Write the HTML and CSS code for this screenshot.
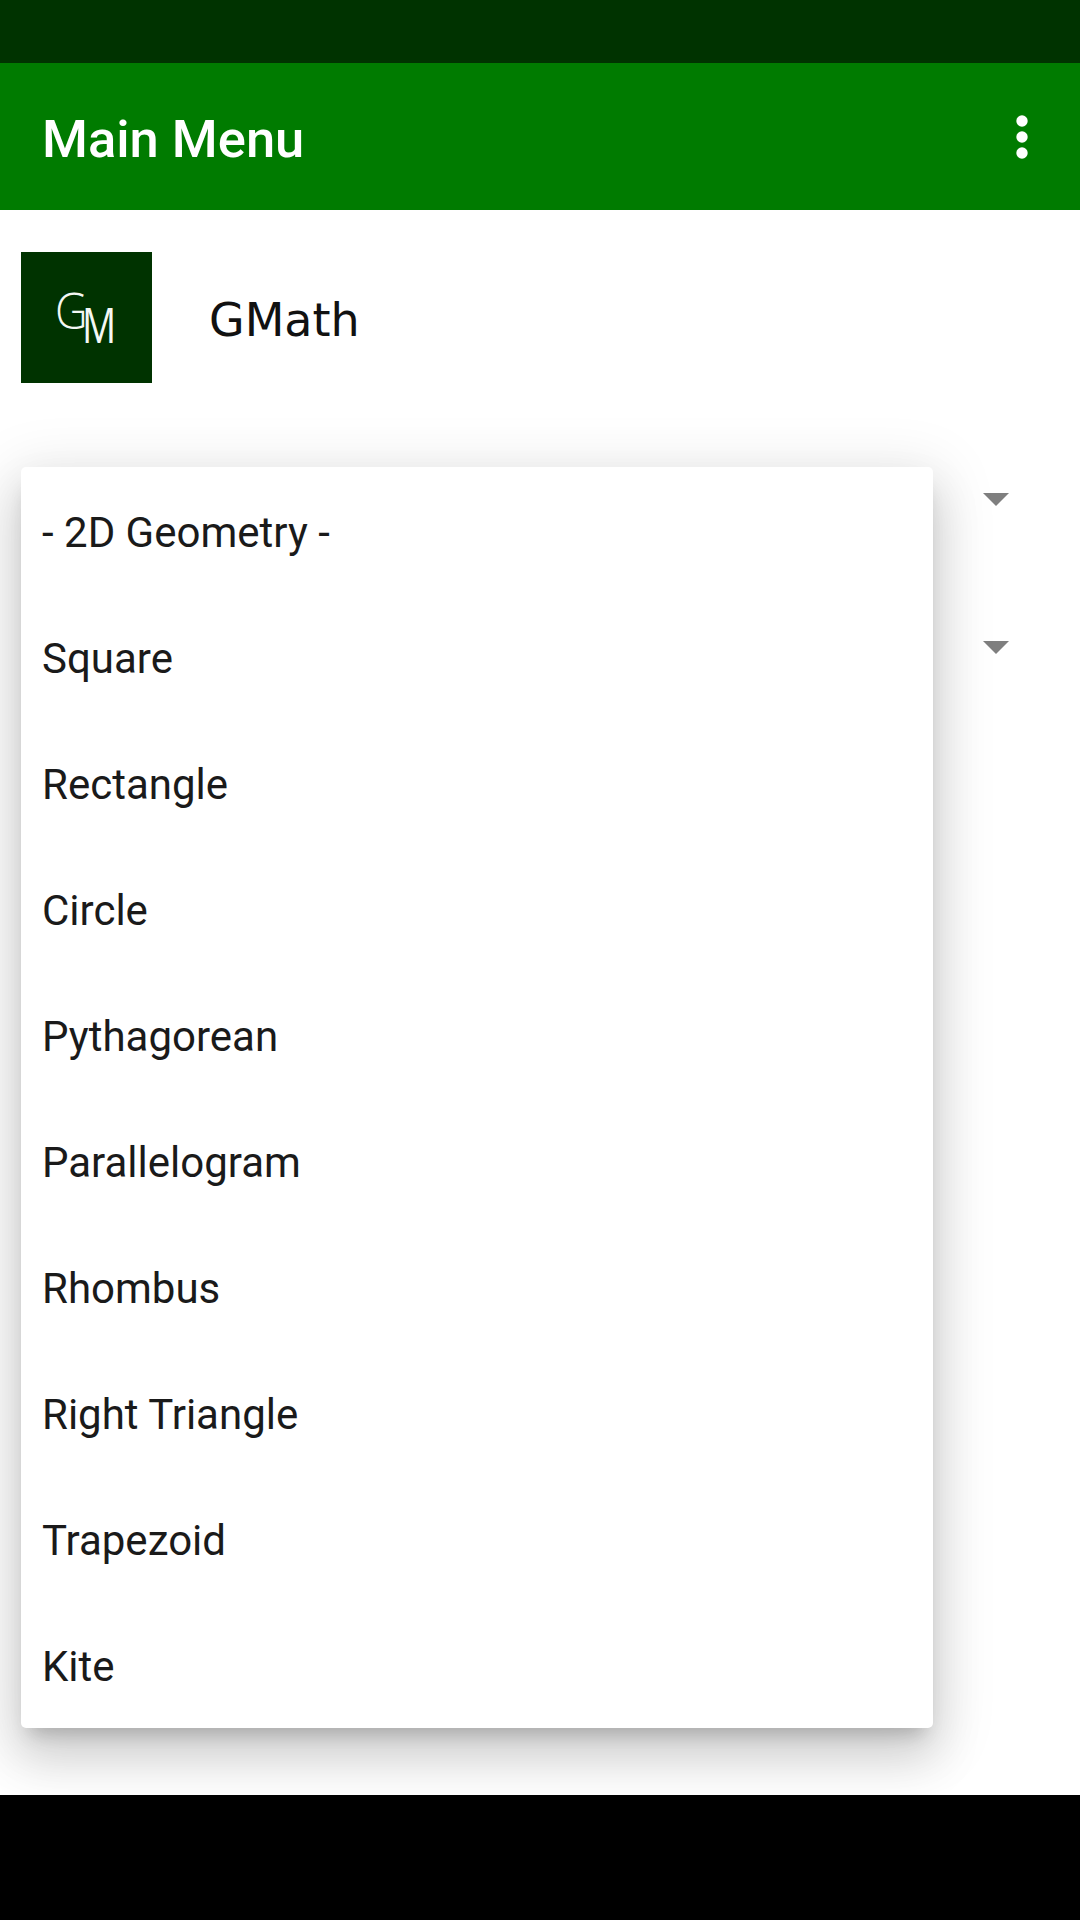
FILE: index.html
```html
<!DOCTYPE html>
<html lang="en">
<head>
<meta charset="utf-8">
<title>Main Menu</title>
<link rel="stylesheet" href="styles.css">
</head>
<body>
<div class="screen">
  <div class="status-bar"></div>
  <header class="app-bar">
    <h1 class="app-title">Main Menu</h1>
    <svg class="overflow" width="14" height="44" viewBox="0 0 14 44"><circle cx="7" cy="6" r="5.7"/><circle cx="7" cy="22" r="5.7"/><circle cx="7" cy="38" r="5.7"/></svg>
  </header>
  <main class="content">
    <div class="brand">
      <div class="logo"><span class="logo-g">G</span><span class="logo-m">M</span></div>
      <div class="brand-name">GMath</div>
    </div>
    <div class="spinner"><span class="caret"></span></div>
    <div class="spinner"><span class="caret"></span></div>
    <ul class="menu">
      <li>- 2D Geometry -</li>
      <li>Square</li>
      <li>Rectangle</li>
      <li>Circle</li>
      <li>Pythagorean</li>
      <li>Parallelogram</li>
      <li>Rhombus</li>
      <li>Right Triangle</li>
      <li>Trapezoid</li>
      <li>Kite</li>
    </ul>
  </main>
  <div class="nav-bar"></div>
</div>
</body>
</html>
```
FILE: styles.css
```css
* { box-sizing: border-box; }
html, body { margin: 0; padding: 0; }
body { width: 1080px; height: 1920px; overflow: hidden; font-family: Roboto, sans-serif; background: #fff; }
.screen { width: 1080px; height: 1920px; display: flex; flex-direction: column; }
.status-bar { height: 63px; background: #003300; flex: none; }
.app-bar { height: 147px; flex: none; background: #007b00; display: flex; align-items: center; justify-content: space-between; padding: 6px 51px 0 42px; }
.app-title { margin: 0; color: #fff; font-size: 52.5px; font-weight: 500; line-height: 1; }
.overflow { fill: #fff; margin-top: -5px; }
.content { flex: 1; position: relative; overflow: hidden; padding: 42px 0 0 21px; }
.brand { display: flex; align-items: center; gap: 57px; }
.logo { width: 131px; height: 131px; background: #003300; position: relative; flex: none; color: #f4f8f4; font-family: "Open Sans", sans-serif; font-weight: 300; }
.logo-g { position: absolute; left: 34px; top: 25px; font-size: 49px; line-height: 1.36; transform: scaleX(.92); transform-origin: left top; }
.logo-m { position: absolute; left: 61px; top: 38px; font-size: 50px; line-height: 1.36; font-weight: 400; transform: scaleX(.76); transform-origin: left top; }
.brand-name { font-family: "DejaVu Sans", sans-serif; font-size: 46px; color: #111; line-height: 1; padding-top: 4px; }
.spinner { position: absolute; left: 0; width: 1080px; height: 148px; display: flex; align-items: center; justify-content: flex-end; padding-right: 71px; }
.spinner:nth-of-type(2) { top: 215px; }
.spinner:nth-of-type(3) { top: 363px; }
.caret { width: 0; height: 0; border-left: 13px solid transparent; border-right: 13px solid transparent; border-top: 13px solid #7f7f7f; }
.menu { position: absolute; left: 21px; top: 257px; width: 912px; height: 1261px; margin: 0; padding: 2px 0 0; list-style: none; background: #fff; border-radius: 5px; box-shadow: 0 30px 48px 4px rgba(0,0,0,.12), 0 11px 58px 10px rgba(0,0,0,.1), 0 14px 18px -9px rgba(0,0,0,.2); }
.menu li { height: 126px; display: flex; align-items: center; padding-left: 21px; font-size: 42px; color: #1a1a1a; }
.nav-bar { height: 125px; background: #000; flex: none; }
```
